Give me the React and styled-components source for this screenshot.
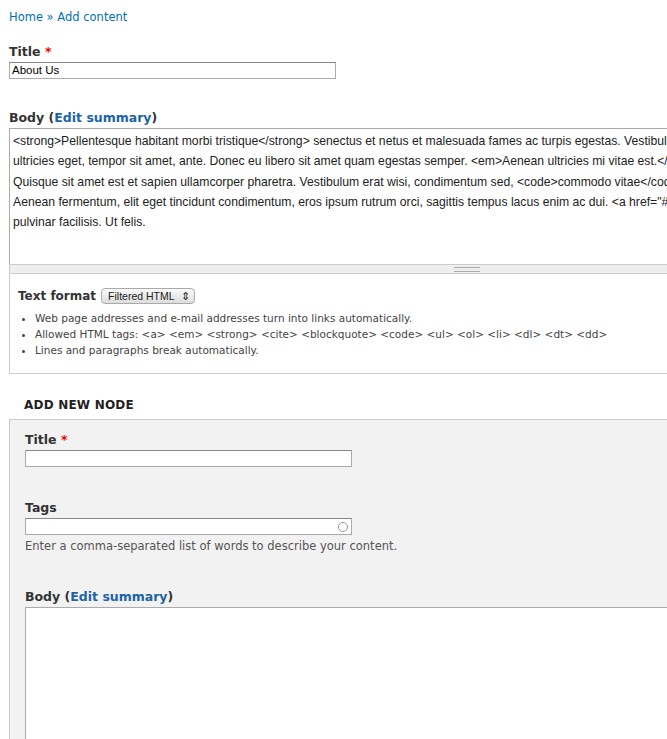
import React from "react";
import styled, { createGlobalStyle } from "styled-components";

const Global = createGlobalStyle`
  html, body { margin: 0; padding: 0; overflow: hidden; background: #fff; }
  body { font-family: "DejaVu Sans", "Liberation Sans", sans-serif; color: #333; }
`;
const Page = styled.div`width: 667px; height: 739px; overflow: hidden; padding: 10px 0 0 9px; box-sizing: border-box;`;
const Crumbs = styled.div`font-size: 11.5px; color: #0071b3; margin-bottom: 20px;`;
const Label = styled.div`font-size: 12.5px; font-weight: bold; color: #333; margin-bottom: 3px; line-height: 15px;`;
const Req = styled.span`color: #e00;`;
const Link = styled.span`color: #1d63a8;`;
const Input = styled.div`
  width: ${p => p.w}px; height: 17px; box-sizing: border-box; border: 1px solid #aaa; border-top-color: #888;
  background: #fff; font-family: "Liberation Sans", sans-serif; font-size: 11.5px; line-height: 15px; padding-left: 2px;
  position: relative; color: #000;
`;
const Throbber = styled.span`position: absolute; right: 3px; top: 3px; width: 8px; height: 8px; border: 1.5px solid #999; border-radius: 50%;`;
const Area = styled.div`
  width: 800px; height: ${p => p.h}px; box-sizing: border-box; border: 1px solid #aaa; border-bottom: ${p => p.closed ? "1px solid #aaa" : "none"}; background: #fff;
  font-family: "Liberation Sans", sans-serif; font-size: 12.2px; line-height: 20.3px; padding: 2px 3px; color: #222; white-space: nowrap;
`;
const Grip = styled.div`
  width: 800px; height: 10px; box-sizing: border-box; background: #eee; border: 1px solid #ccc; display: flex; align-items: center;
  padding-left: 444px;
  &::after { content: ""; width: 26px; height: 3px; border-top: 1px solid #aaa; border-bottom: 1px solid #aaa; }
`;
const Formats = styled.div`width: 800px; height: 100px; box-sizing: border-box; border: 1px solid #ccc; border-top: none; padding: 14px 8px;`;
const FRow = styled.div`display: flex; align-items: center; gap: 5px; font-size: 12px; font-weight: bold; margin-bottom: 6px;`;
const Select = styled.span`
  font-family: "Liberation Sans", sans-serif; font-weight: normal; font-size: 10.5px; border: 1px solid #aaa; border-radius: 4px;
  background: linear-gradient(#fafafa, #ddd); padding: 1px 4px 1px 6px; display: inline-flex; gap: 6px; color: #222;
`;
const Tips = styled.ul`margin: 0; padding-left: 17px; font-size: 10.5px; color: #444; line-height: 16px; list-style: disc;`;
const Legend = styled.div`font-size: 12px; font-weight: bold; color: #222; padding: 24px 0 7px 15px; letter-spacing: 0.2px;`;
const Fieldset = styled.div`width: 800px; height: 400px; background: #f2f2f2; border: 1px solid #ccc; box-sizing: border-box; padding: 12px 15px;`;
const Field = styled.div`margin-bottom: ${p => p.mb}px;`;
const Desc = styled.div`font-size: 11.5px; color: #555; margin-top: 4px;`;
const Spacer = styled.div`height: ${p => p.h}px;`;

export default function App() {
  return (
    <Page>
      <Global />
      <Crumbs>Home » Add content</Crumbs>
      <Label>Title <Req>*</Req></Label>
      <Input w={327}>About Us</Input>
      <Spacer h={31} />
      <Label>Body (<Link>Edit summary</Link>)</Label>
      <Area h={136}>
        <div>&lt;strong&gt;Pellentesque habitant morbi tristique&lt;/strong&gt; senectus et netus et malesuada fames ac turpis egestas. Vestibulum</div>
        <div>ultricies eget, tempor sit amet, ante. Donec eu libero sit amet quam egestas semper. &lt;em&gt;Aenean ultricies mi vitae est.&lt;/em&gt;</div>
        <div>Quisque sit amet est et sapien ullamcorper pharetra. Vestibulum erat wisi, condimentum sed, &lt;code&gt;commodo vitae&lt;/code&gt;</div>
        <div>Aenean fermentum, elit eget tincidunt condimentum, eros ipsum rutrum orci, sagittis tempus lacus enim ac dui. &lt;a href="#"&gt;Donec</div>
        <div>pulvinar facilisis. Ut felis.</div>
      </Area>
      <Grip />
      <Formats>
        <FRow>Text format <Select>Filtered HTML <span>⇕</span></Select></FRow>
        <Tips>
          <li>Web page addresses and e-mail addresses turn into links automatically.</li>
          <li>Allowed HTML tags: &lt;a&gt; &lt;em&gt; &lt;strong&gt; &lt;cite&gt; &lt;blockquote&gt; &lt;code&gt; &lt;ul&gt; &lt;ol&gt; &lt;li&gt; &lt;dl&gt; &lt;dt&gt; &lt;dd&gt;</li>
          <li>Lines and paragraphs break automatically.</li>
        </Tips>
      </Formats>
      <Legend>ADD NEW NODE</Legend>
      <Fieldset>
        <Field mb={33}>
          <Label>Title <Req>*</Req></Label>
          <Input w={327} />
        </Field>
        <Field mb={36}>
          <Label>Tags</Label>
          <Input w={327}><Throbber /></Input>
          <Desc>Enter a comma-separated list of words to describe your content.</Desc>
        </Field>
        <Field mb={0}>
          <Label>Body (<Link>Edit summary</Link>)</Label>
          <Area h={200} closed />
        </Field>
      </Fieldset>
    </Page>
  );
}
